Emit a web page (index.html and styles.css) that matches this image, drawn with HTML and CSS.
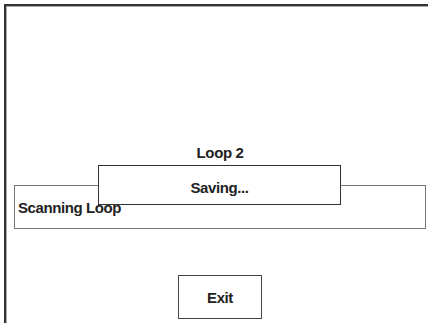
FILE: index.html
```html
<!DOCTYPE html>
<html lang="en">
<head>
  <meta charset="UTF-8">
  <title>Scanning Loop</title>
  <link rel="stylesheet" href="styles.css">
</head>
<body>
  <div class="window">
    <div class="content">
      <div class="loop-label">Loop 2</div>
      <div class="scan-box">Scanning Loop</div>
      <button class="exit-btn">Exit</button>
    </div>
  </div>

  <div class="saving">Saving...</div>
</body>
</html>
```

FILE: styles.css
```css
body {
  margin: 0;
  background: #fff;
  font-family: 'Liberation Sans', Arial, sans-serif;
  font-weight: bold;
  font-size: 15px;
  letter-spacing: -0.4px;
  color: #222;
  position: relative;
  width: 428px;
  height: 323px;
  overflow: hidden;
}
.window {
  margin: 4px 0 0 4px;
  height: 317px;
  border-top: 2px solid #333;
  border-left: 2px solid #333;
  box-shadow: inset 1px 1px 0 #aaa;
}
.content {
  margin-left: 8px;
  width: 412px;
  display: flex;
  flex-direction: column;
  align-items: center;
}
.loop-label {
  margin-top: 138px;
  line-height: 18px;
}
.scan-box {
  align-self: stretch;
  margin-top: 23px;
  height: 42px;
  border: 1px solid #777;
  display: flex;
  align-items: center;
  padding-left: 3px;
}
.exit-btn {
  margin-top: 46px;
  width: 84px;
  height: 44px;
  background: #fff;
  border: 1px solid #444;
  font: inherit;
  color: inherit;
  letter-spacing: inherit;
  padding: 0;
}
.saving {
  position: absolute;
  left: 98px;
  top: 165px;
  width: 241px;
  height: 34px;
  padding-top: 4px;
  background: #fff;
  border: 1px solid #333;
  display: flex;
  justify-content: center;
  align-items: center;
}
```
